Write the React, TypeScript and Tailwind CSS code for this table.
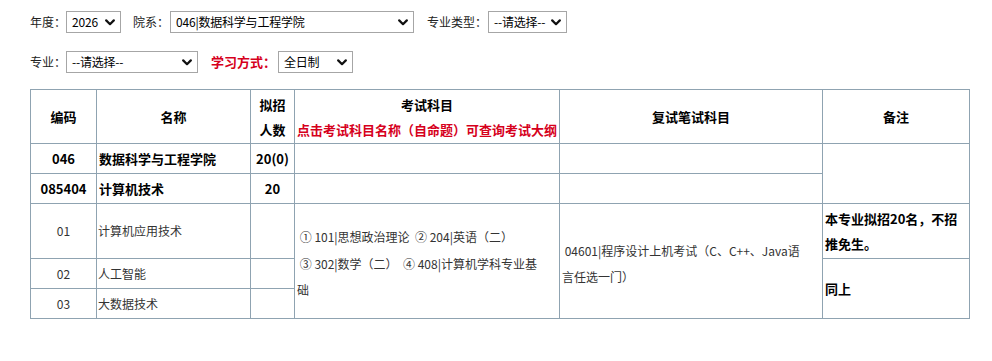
import React from "react";

const FONT = '"Noto Sans CJK SC", "Noto Sans", sans-serif';

function Chevron() {
  return (
    <svg width="10" height="7" viewBox="0 0 10 7" className="shrink-0">
      <path d="M1.2 1.4 L5 5.2 L8.8 1.4" fill="none" stroke="#111" strokeWidth="2.2" strokeLinecap="round" strokeLinejoin="round" />
    </svg>
  );
}

function FakeSelect({ value, width }: { value: string; width: string }) {
  return (
    <div
      className={`${width} h-[22px] flex items-center justify-between border border-[#a6a6a6] bg-white pl-[5px] pr-[5px] text-[12px] text-black leading-none`}
    >
      <span className="whitespace-nowrap tracking-[-0.2px]">{value}</span>
      <Chevron />
    </div>
  );
}

const cell = "border border-[#8fa3b1] p-0 align-middle";

export default function App() {
  return (
    <div className="w-[992px] h-[361px] bg-white pl-[30px] pt-[11px]" style={{ fontFamily: FONT }}>
      {/* filter row 1 */}
      <div className="flex items-center h-[22px] text-[12px] text-[#222]">
        <span className="w-[36px]">年度：</span>
        <FakeSelect value="2026" width="w-[55px]" />
        <span className="ml-[12px] w-[37px]">院系：</span>
        <FakeSelect value="046|数据科学与工程学院" width="w-[244px]" />
        <span className="ml-[13px] w-[61px]">专业类型：</span>
        <FakeSelect value="--请选择--" width="w-[79px]" />
      </div>

      {/* filter row 2 */}
      <div className="flex items-center h-[22px] mt-[18px] text-[12px] text-[#222]">
        <span className="w-[36px]">专业：</span>
        <FakeSelect value="--请选择--" width="w-[132px]" />
        <span className="ml-[13px] w-[67px] text-[13px] font-bold text-[#d6001c]">学习方式：</span>
        <FakeSelect value="全日制" width="w-[75px]" />
      </div>

      {/* enrolment table */}
      <table className="mt-[16px] w-[939px] table-fixed border-collapse text-[13px] text-black">
        <colgroup>
          <col className="w-[66px]" />
          <col className="w-[154px]" />
          <col className="w-[44px]" />
          <col className="w-[265px]" />
          <col className="w-[263px]" />
          <col className="w-[147px]" />
        </colgroup>
        <tbody>
          <tr className="h-[54px] font-bold leading-[25px]">
            <td className={`${cell} text-center`}>编码</td>
            <td className={`${cell} text-center`}>名称</td>
            <td className={`${cell} text-center`}>
              拟招
              <br />
              人数
            </td>
            <td className={`${cell} text-center`}>
              考试科目
              <br />
              <span className="text-[#d6001c] whitespace-nowrap">点击考试科目名称（自命题）可查询考试大纲</span>
            </td>
            <td className={`${cell} text-center`}>复试笔试科目</td>
            <td className={`${cell} text-center`}>备注</td>
          </tr>

          <tr className="h-[30px] font-bold">
            <td className={`${cell} text-center`}>046</td>
            <td className={`${cell} pl-[2px]`}>数据科学与工程学院</td>
            <td className={`${cell} text-center`}>20(0)</td>
            <td className={cell}></td>
            <td className={cell}></td>
            <td className={cell} rowSpan={2}></td>
          </tr>

          <tr className="h-[30px] font-bold">
            <td className={`${cell} text-center`}>085404</td>
            <td className={`${cell} pl-[2px]`}>计算机技术</td>
            <td className={`${cell} text-center`}>20</td>
            <td className={cell}></td>
            <td className={cell}></td>
          </tr>

          <tr className="h-[55px] text-[12px] text-[#333]">
            <td className={`${cell} text-center`}>01</td>
            <td className={`${cell} pl-[1px]`}>计算机应用技术</td>
            <td className={cell}></td>
            <td className={`${cell} pl-[2px] pt-[6px] leading-[26.5px]`} rowSpan={3}>
              <span className="whitespace-nowrap">&nbsp;① 101|思想政治理论&nbsp;&nbsp;② 204|英语（二）</span>
              <br />
              <span className="whitespace-nowrap">&nbsp;③ 302|数学（二）&nbsp;&nbsp;④ 408|计算机学科专业基</span>
              <br />
              础
            </td>
            <td className={`${cell} pl-[2px] pt-[5px] leading-[26px]`} rowSpan={3}>
              <span className="whitespace-nowrap">&nbsp;04601|程序设计上机考试（C、C++、Java语</span>
              <br />
              言任选一门）
            </td>
            <td className={`${cell} pl-[2px] text-[13px] font-bold text-black leading-[25px]`}>
              本专业拟招20名，不招
              <br />
              推免生。
            </td>
          </tr>

          <tr className="h-[30px] text-[12px] text-[#333]">
            <td className={`${cell} text-center`}>02</td>
            <td className={`${cell} pl-[1px]`}>人工智能</td>
            <td className={cell}></td>
            <td className={`${cell} pl-[2px] text-[13px] font-bold text-black`} rowSpan={2}>
              同上
            </td>
          </tr>

          <tr className="h-[30px] text-[12px] text-[#333]">
            <td className={`${cell} text-center`}>03</td>
            <td className={`${cell} pl-[1px]`}>大数据技术</td>
            <td className={cell}></td>
          </tr>
        </tbody>
      </table>
    </div>
  );
}
